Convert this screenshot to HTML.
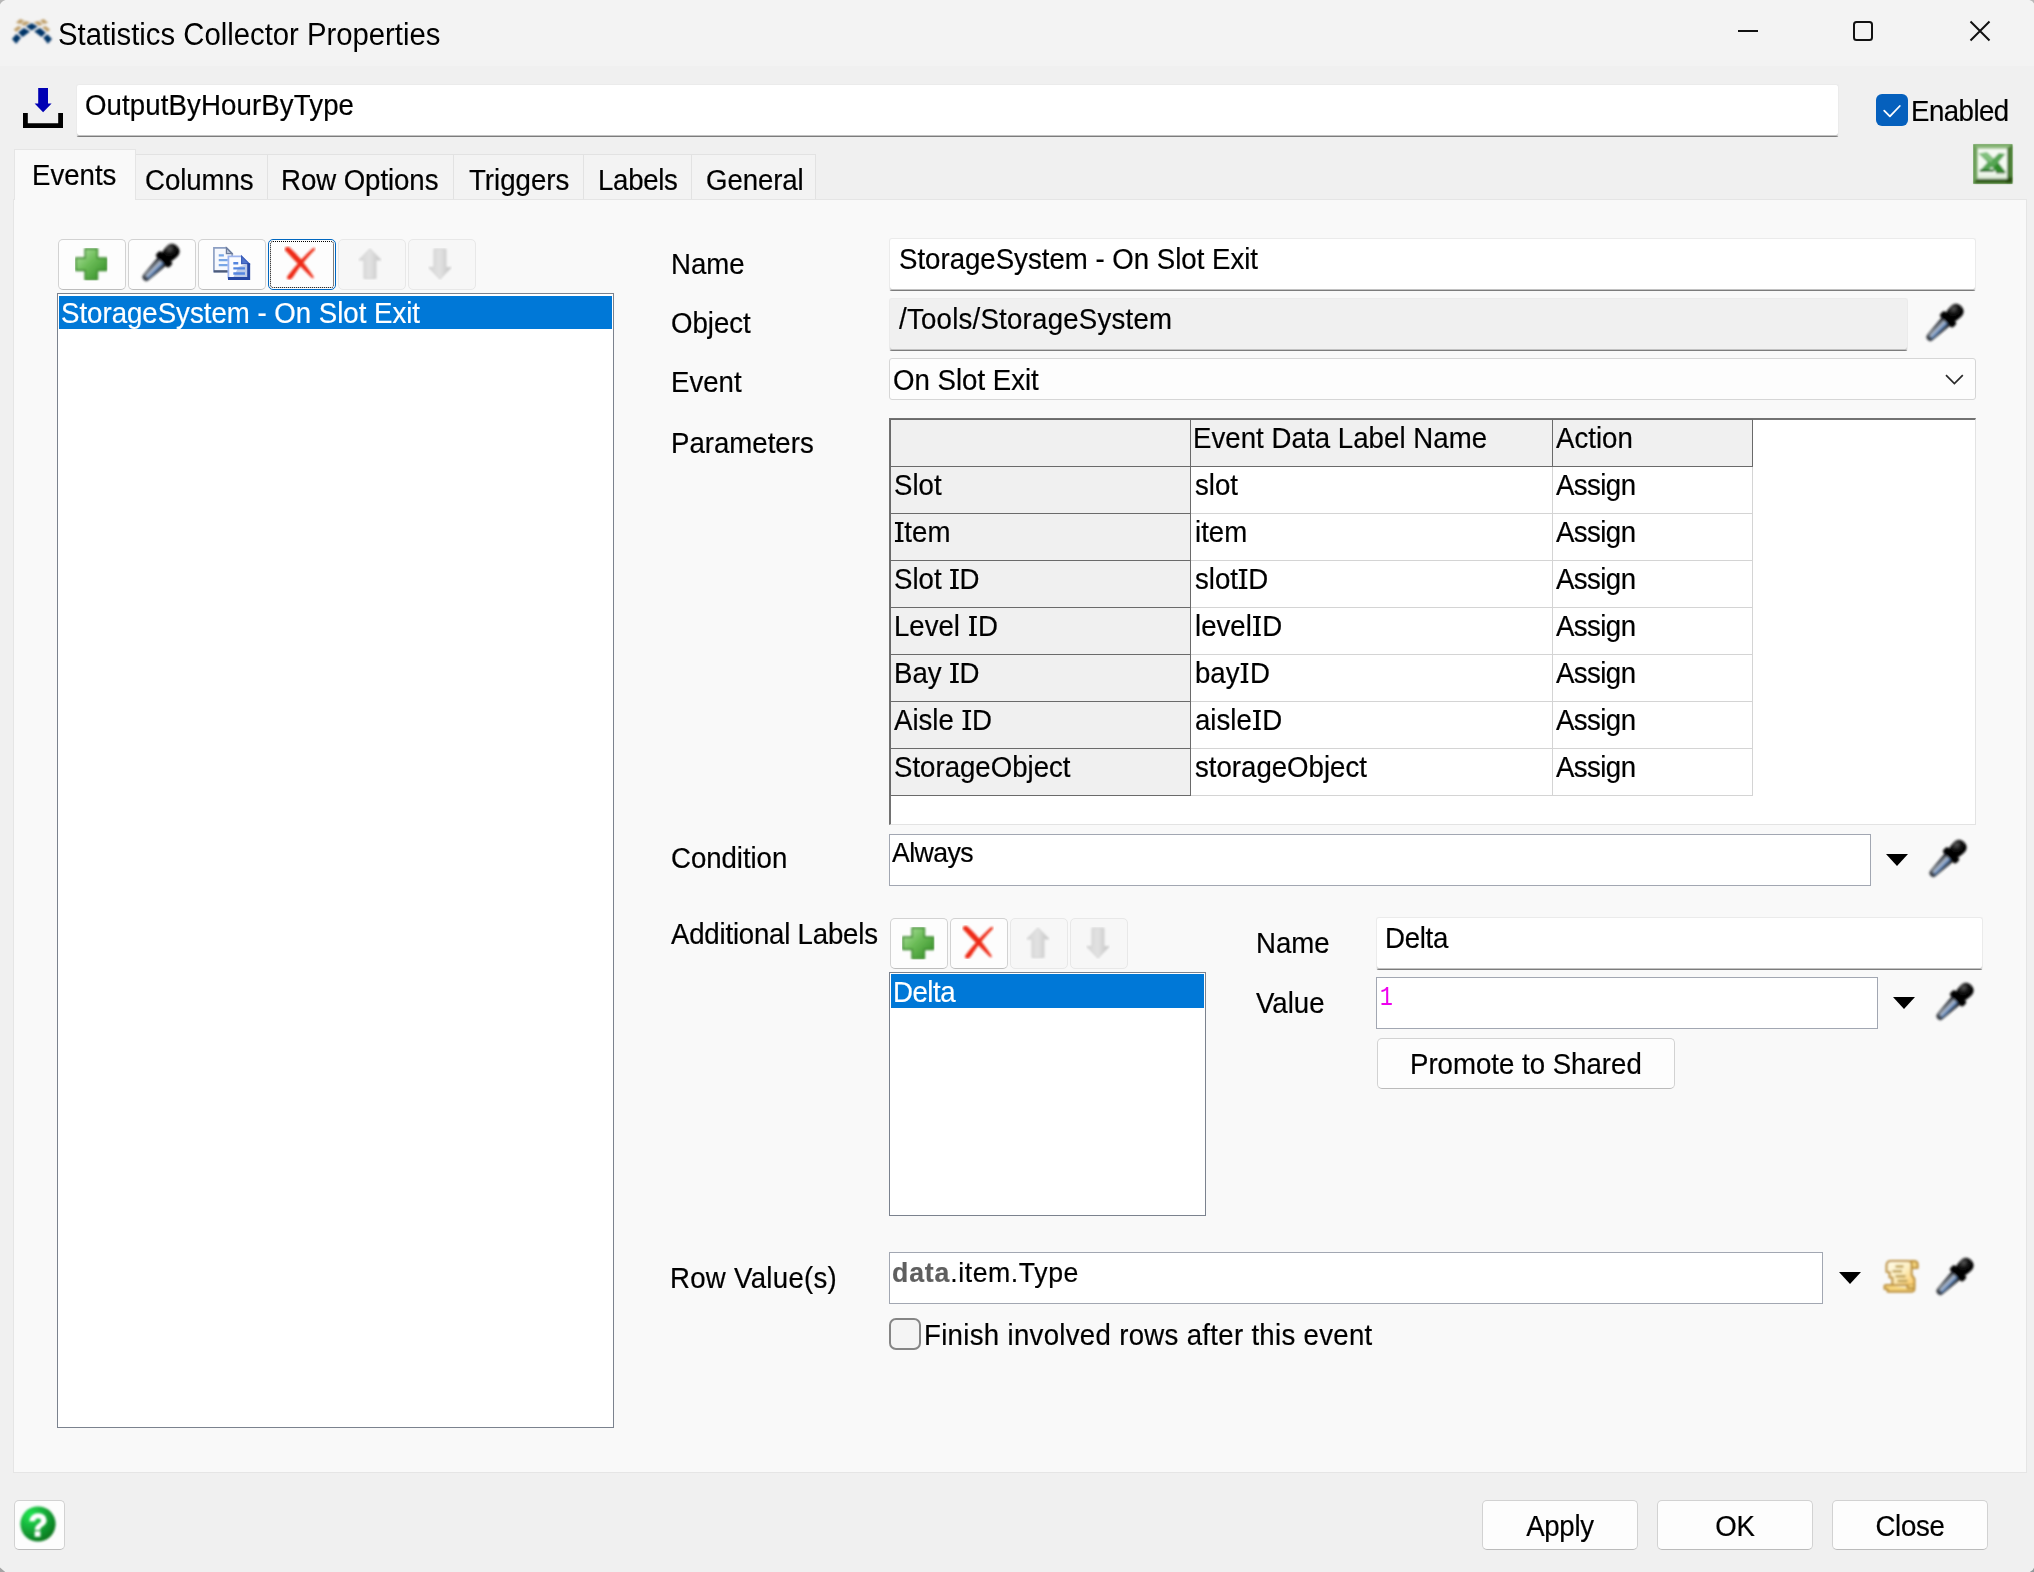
<!DOCTYPE html>
<html>
<head>
<meta charset="utf-8">
<title>Statistics Collector Properties</title>
<style>
*{box-sizing:border-box;margin:0;padding:0}
html,body{width:2034px;height:1572px;overflow:hidden}
body{background:#f0f0f0;font-family:"Liberation Sans",sans-serif;font-size:29px;color:#000;position:relative}
.a{position:absolute;white-space:pre}
.t{position:absolute;z-index:2;white-space:pre;-webkit-text-stroke:0.2px currentColor;line-height:32px;height:32px;margin-top:-0.5px;transform:scaleX(.952);transform-origin:0 0}
.t.c{transform-origin:50% 0}
#titlebar{left:0;top:0;width:2034px;height:66px;background:#f3f3f3}
#title{left:57.8px;top:16.3px;font-size:30.6px;line-height:36px;transform:scaleX(.957);-webkit-text-stroke:0}
.inp{position:absolute;background:#fff;border:1px solid #ebebeb;border-bottom:1px solid #7c7c7c;border-radius:3px;box-shadow:inset 0 -1px 0 #c2c2c2}
.box{position:absolute;background:#fff;border:1px solid #7b828e}
.tab{position:absolute;top:154px;height:46px;background:#f3f3f3;border:1px solid #e2e2e2;border-bottom:none}
#panel{left:13px;top:199px;width:2014px;height:1274px;background:#f9f9f9;border:1px solid #e5e5e5}
.tb{position:absolute;width:68px;height:51px;background:#fdfdfd;border:1px solid #d2d2d2;border-bottom-color:#bdbdbd;border-radius:5px}
.tb.dis{background:#f7f7f7;border-color:#e8e8e8}
.btn{position:absolute;background:#fdfdfd;border:1px solid #d2d2d2;border-bottom-color:#bbb;border-radius:5px;text-align:center}
.sel{position:absolute;background:#0078d7;color:#fff}
.hc{background:#f0f0f0;border:1px solid #6a6a6a;z-index:1}
.dc{background:#fff;border:1px solid #d4d4d4}
.cbox{position:absolute;background:#fff;border:1px solid #a2a7b2}
.tri{position:absolute;width:0;height:0;border-left:11px solid transparent;border-right:11px solid transparent;border-top:12px solid #000}
.I{display:inline-block;width:10.9px;height:20px;position:relative;letter-spacing:0}
.I::before{content:"";position:absolute;left:1.3px;right:1.3px;top:0;bottom:0;border-top:2px solid currentColor;border-bottom:2px solid currentColor}
.I::after{content:"";position:absolute;left:4.05px;width:2.8px;top:0;bottom:0;background:currentColor}
svg.a{overflow:visible}
</style>
</head>
<body>

<svg width="0" height="0" style="position:absolute">
<defs>
<linearGradient id="gTube" x1="0" x2="1" y1="0" y2="0">
 <stop offset="0" stop-color="#101418"/><stop offset="0.16" stop-color="#2c323a"/><stop offset="0.32" stop-color="#97a1ae"/><stop offset="0.47" stop-color="#aab6c8"/><stop offset="0.62" stop-color="#6c98d2"/><stop offset="0.78" stop-color="#3e4c60"/><stop offset="0.88" stop-color="#14181e"/><stop offset="1" stop-color="#08090c"/>
</linearGradient>
<radialGradient id="gBulb" cx="0.25" cy="0.45" r="0.6">
 <stop offset="0" stop-color="#5a5a5a"/><stop offset="0.55" stop-color="#101010"/><stop offset="1" stop-color="#000"/>
</radialGradient>
<linearGradient id="gPlus" x1="0" x2="1" y1="0" y2="1">
 <stop offset="0" stop-color="#b4e4a4"/><stop offset="0.45" stop-color="#6cbc58"/><stop offset="1" stop-color="#2f8a22"/>
</linearGradient>
<linearGradient id="gArr" x1="0" x2="1" y1="0" y2="0">
 <stop offset="0" stop-color="#d6d6d6"/><stop offset="0.5" stop-color="#e2e2e2"/><stop offset="1" stop-color="#c2c2c2"/>
</linearGradient>
<radialGradient id="gHelp" cx="0.3" cy="0.25" r="0.85">
 <stop offset="0" stop-color="#20e850"/><stop offset="0.5" stop-color="#16a838"/><stop offset="1" stop-color="#06701a"/>
</radialGradient>
<linearGradient id="gScroll" x1="0" x2="1" y1="0" y2="1">
 <stop offset="0" stop-color="#fffbe8"/><stop offset="0.5" stop-color="#fdf0c4"/><stop offset="1" stop-color="#fcc860"/>
</linearGradient>
<filter id="b3" x="-20%" y="-20%" width="140%" height="140%"><feGaussianBlur stdDeviation="0.8"/></filter>
<filter id="b6" x="-20%" y="-20%" width="140%" height="140%"><feGaussianBlur stdDeviation="0.8"/></filter>

<symbol id="dropper" viewBox="0 0 38 38" overflow="visible">
 <g transform="translate(1.6,35.8) rotate(45)" filter="url(#b6)">
  <path d="M-3.2,-3.8 Q-3.2,-0.6 0,-0.6 Q3.2,-0.6 3.2,-3.8 L5.4,-26.5 L-5.4,-26.5 Z" fill="url(#gTube)" stroke="#1c2026" stroke-width="1.3" stroke-opacity="0.85" stroke-linejoin="round"/>
  <ellipse cx="0" cy="-2.4" rx="2.6" ry="2" fill="#2a2e34" opacity="0.8"/>
  <rect x="-9.2" y="-32.6" width="18.4" height="7.2" rx="2.2" fill="#020202"/>
  <path d="M-5.8,-31.5 Q-7.4,-35 -7.4,-40 Q-7.4,-47.6 0,-47.6 Q7.4,-47.6 7.4,-40 Q7.4,-35 5.8,-31.5 Z" fill="url(#gBulb)"/>
 </g>
</symbol>

<symbol id="plus" viewBox="0 0 32 32">
 <path filter="url(#b3)" d="M10,0.8 H22 V10 H31.2 V22 H22 V31.2 H10 V22 H0.8 V10 H10 Z" fill="url(#gPlus)" stroke="#3c8c2e" stroke-width="1.6" stroke-linejoin="round"/>
</symbol>

<symbol id="redx" viewBox="0 0 32 34">
 <g filter="url(#b3)" fill="#ee2a12">
  <path d="M0.5,3.5 Q2,-0.5 5.5,1.5 Q16,11 22,20 Q27,26.5 30,31.5 Q28.5,33 27,31 Q22,26 17,21 Q8,12 0.5,3.5 Z"/>
  <path d="M31.5,3 Q30,1 28,3 Q18,12 10,22 Q5,28 3,31 Q3,34 6.5,33.5 Q9,32 11,28 Q18,17 31.5,3 Z"/>
 </g>
</symbol>

<symbol id="uparr" viewBox="0 0 24 32">
 <path filter="url(#b3)" d="M12,0.8 L23.2,12 H18 V30.5 H6 V12 H0.8 Z" fill="url(#gArr)" stroke="#cfcfcf" stroke-width="1"/>
</symbol>
<symbol id="dnarr" viewBox="0 0 24 32">
 <path filter="url(#b3)" d="M12,31.2 L23.2,19.5 H18 V1 H6 V19.5 H0.8 Z" fill="url(#gArr)" stroke="#cfcfcf" stroke-width="1"/>
</symbol>

<symbol id="copy" viewBox="0 0 38 34" overflow="visible">
 <g filter="url(#b3)">
  <path d="M0.9,0.9 H13.6 L19.4,6.8 V25 H0.9 Z" fill="#f6f8fd" stroke="#8c9ec2" stroke-width="1.7"/>
  <path d="M13.6,0.9 V6.8 H19.4 Z" fill="#b8c4da" stroke="#6c7c9c" stroke-width="1.3"/>
  <path d="M0.9,24.7 H15" stroke="#4e5c7c" stroke-width="2.3"/>
  <g stroke="#78a6e6" stroke-width="2.3"><path d="M5.8,8.6H11M5.8,13.4H15M5.8,18.5H15"/></g>
  <path d="M15.4,9.2 H29 L36.6,16.6 V32.2 H15.4 Z" fill="#fbfcff"/>
  <path d="M26,20 L36,17 V32 H20 Z" fill="#a9bbdf" opacity="0.75"/>
  <path d="M15.6,32 V9.4 H29" fill="none" stroke="#9db4ee" stroke-width="1.8"/>
  <path d="M29,9.2 V16.8 H36.6 Z" fill="#4f74cc" stroke="#3a5cba" stroke-width="1.2"/>
  <path d="M36.2,16.4 V32 H15.2" fill="none" stroke="#2646a4" stroke-width="3"/>
  <g stroke="#5586e0" stroke-width="2.5"><path d="M20.6,16.6H25.6M20.6,21.7H32.4M20.6,26.8H32.4"/></g>
 </g>
</symbol>

<symbol id="scroll" viewBox="0 0 36 34" overflow="visible">
 <g filter="url(#b3)" stroke="#bf9440" stroke-width="2.2" stroke-linejoin="round">
  <path d="M27,2 H31 Q34.6,2 34.6,5.5 V9 H28.5" fill="#f2d27a"/>
  <path d="M8,2 Q3.6,2 3.6,6.5 V13 H6.6 V18.5 H9.4 V26 H31.4 V20 L28.6,16 V5 Q28.6,2 25,2 Z" fill="url(#gScroll)"/>
  <path d="M1.6,26 H24.5 V29.2 H31.4 V26 M1.6,26 V30 H4.6 V32.6 H28.8 Q31.4,32.6 31.4,29.6" fill="#f7d57c"/>
  <g stroke="#bfa258" stroke-width="2.6" fill="none"><path d="M12.5,7.5H20.5M9.5,12.3H19M12.5,17.3H22.5M14.5,22H24.5"/></g>
 </g>
</symbol>

<symbol id="excel" viewBox="0 0 40 40" overflow="visible">
 <rect x="0.2" y="0.2" width="39.3" height="39.6" fill="#6da05a"/>
 <g filter="url(#b3)">
  <path d="M1,1 H39 L35,4.6 H4.4 Z" fill="#8cba7c"/>
  <path d="M39,1 V39 L34,34.6 V4.6 Z" fill="#4c7c34"/>
  <path d="M1,39 H39 L34,34.6 H4.4 Z" fill="#365e1c"/>
  <path d="M37,33 L39,33 V39 H33 V37 Z" fill="#284a10"/>
  <rect x="4.4" y="4.6" width="29.6" height="30" fill="#f4faf2"/>
  <path d="M5.6,9.6 L14,8.2 L20.5,14.6 L26,9 L32.4,10 L25.2,18.6 L32.8,28.2 L23.4,28.8 L19,23 L13,27.8 L6,27.6 L14.6,18.2 Z" fill="#55a552"/>
  <path d="M5.6,9.6 L14,8.2 L20.5,14.6 L17.5,18.5 Z" fill="#8cc888" opacity="0.8"/>
  <path d="M25.2,18.6 L32.8,28.2 L23.4,28.8 L20.5,23.5 Z" fill="#2f8a2c"/>
  <path d="M6.8,26.6 H21" stroke="#176817" stroke-width="2.4"/>
  <path d="M23,28.6 H32" stroke="#3a6a2a" stroke-width="1.6"/>
  <rect x="5" y="30.5" width="28.4" height="3.6" fill="#e4f0e0"/>
 </g>
</symbol>
</defs>
</svg>
<div class="a" id="titlebar"></div>
<div class="t" id="title">Statistics Collector Properties</div>

<!-- name row -->
<div class="inp" style="left:76px;top:84px;width:1763px;height:53px"></div>
<div class="t" style="left:85px;top:89px;letter-spacing:0.12px">OutputByHourByType</div>
<div class="t" style="left:1910.6px;top:95.3px;letter-spacing:-0.55px">Enabled</div>

<!-- tabs -->
<div class="tab" style="left:135px;width:133px"></div>
<div class="tab" style="left:267px;width:187px"></div>
<div class="tab" style="left:453px;width:131px"></div>
<div class="tab" style="left:583px;width:109px"></div>
<div class="tab" style="left:691px;width:125px"></div>
<div class="a" id="panel"></div>
<div class="a" style="left:14px;top:149px;width:122px;height:51px;background:#f9f9f9;border:1px solid #e5e5e5;border-bottom:none"></div>
<div class="t" style="left:31.6px;top:159px">Events</div>
<div class="t" style="left:145px;top:164px;letter-spacing:-0.05px">Columns</div>
<div class="t" style="left:281.4px;top:164px;letter-spacing:-0.06px">Row Options</div>
<div class="t" style="left:469px;top:164px">Triggers</div>
<div class="t" style="left:597.7px;top:164px;letter-spacing:-0.3px">Labels</div>
<div class="t" style="left:706px;top:164px;letter-spacing:-0.1px">General</div>

<!-- left toolbar + list -->
<div class="tb" style="left:58px;top:239px"></div>
<div class="tb" style="left:128px;top:239px"></div>
<div class="tb" style="left:198px;top:239px"></div>
<div class="tb" style="left:268px;top:239px;border-color:#0067c0"></div>
<div class="tb dis" style="left:338px;top:239px"></div>
<div class="tb dis" style="left:408px;top:239px"></div>
<div class="box" style="left:57px;top:293px;width:557px;height:1135px"></div>
<div class="sel" style="left:59px;top:296px;width:553px;height:33px"></div>
<div class="t" style="left:61px;top:297px;color:#fff">StorageSystem - On Slot Exit</div>

<!-- right form -->
<div class="t" style="left:670.9px;top:248.2px">Name</div>
<div class="t" style="left:671.2px;top:307.2px">Object</div>
<div class="t" style="left:671.2px;top:366.2px">Event</div>
<div class="t" style="left:670.6px;top:427.6px">Parameters</div>
<div class="t" style="left:670.6px;top:842.8px;letter-spacing:-0.05px">Condition</div>
<div class="t" style="left:671px;top:918.7px;letter-spacing:-0.22px">Additional Labels</div>
<div class="t" style="left:670.3px;top:1262px;letter-spacing:0.3px">Row Value(s)</div>

<div class="inp" style="left:889px;top:238px;width:1087px;height:53px"></div>
<div class="t" style="left:899px;top:243px">StorageSystem - On Slot Exit</div>
<div class="inp" style="left:889px;top:298px;width:1019px;height:53px;background:#f0f0f0"></div>
<div class="t" style="left:898.8px;top:303px;letter-spacing:0.25px">/Tools/StorageSystem</div>
<div class="a" style="left:889px;top:358px;width:1087px;height:42px;background:#fdfdfd;border:1px solid #d6d6d6;border-radius:3px"></div>
<div class="t" style="left:893px;top:364px">On Slot Exit</div>

<!-- parameters table -->
<div class="a" style="left:889px;top:418px;width:1087px;height:407px;background:#fff;border-left:2px solid #727272;border-top:2px solid #727272;border-right:1px solid #e3e3e3;border-bottom:1px solid #e3e3e3"></div>
<div class="a hc" style="left:890px;top:419px;width:301px;height:48px"></div>
<div class="a hc" style="left:1190px;top:419px;width:363px;height:48px"></div>
<div class="a hc" style="left:1552px;top:419px;width:201px;height:48px"></div>
<div class="t" style="left:1193.4px;top:422px;letter-spacing:0.05px">Event Data Label Name</div>
<div class="t" style="left:1556px;top:422px">Action</div>
<div class="a hc" style="left:890px;top:466px;width:301px;height:48px"></div>
<div class="a dc" style="left:1190px;top:466px;width:363px;height:48px"></div>
<div class="a dc" style="left:1552px;top:466px;width:201px;height:48px"></div>
<div class="t" style="left:894px;top:469.6px">Slot</div>
<div class="t" style="left:1195px;top:469.6px">slot</div>
<div class="t" style="left:1556px;top:469.6px;letter-spacing:-0.6px">Assign</div>
<div class="a hc" style="left:890px;top:513px;width:301px;height:48px"></div>
<div class="a dc" style="left:1190px;top:513px;width:363px;height:48px"></div>
<div class="a dc" style="left:1552px;top:513px;width:201px;height:48px"></div>
<div class="t" style="left:894px;top:516.6px"><span class="I"></span>tem</div>
<div class="t" style="left:1195px;top:516.6px">item</div>
<div class="t" style="left:1556px;top:516.6px;letter-spacing:-0.6px">Assign</div>
<div class="a hc" style="left:890px;top:560px;width:301px;height:48px"></div>
<div class="a dc" style="left:1190px;top:560px;width:363px;height:48px"></div>
<div class="a dc" style="left:1552px;top:560px;width:201px;height:48px"></div>
<div class="t" style="left:894px;top:563.6px">Slot <span class="I"></span>D</div>
<div class="t" style="left:1195px;top:563.6px">slot<span class="I"></span>D</div>
<div class="t" style="left:1556px;top:563.6px;letter-spacing:-0.6px">Assign</div>
<div class="a hc" style="left:890px;top:607px;width:301px;height:48px"></div>
<div class="a dc" style="left:1190px;top:607px;width:363px;height:48px"></div>
<div class="a dc" style="left:1552px;top:607px;width:201px;height:48px"></div>
<div class="t" style="left:894px;top:610.6px">Level <span class="I"></span>D</div>
<div class="t" style="left:1195px;top:610.6px">level<span class="I"></span>D</div>
<div class="t" style="left:1556px;top:610.6px;letter-spacing:-0.6px">Assign</div>
<div class="a hc" style="left:890px;top:654px;width:301px;height:48px"></div>
<div class="a dc" style="left:1190px;top:654px;width:363px;height:48px"></div>
<div class="a dc" style="left:1552px;top:654px;width:201px;height:48px"></div>
<div class="t" style="left:894px;top:657.6px">Bay <span class="I"></span>D</div>
<div class="t" style="left:1195px;top:657.6px">bay<span class="I"></span>D</div>
<div class="t" style="left:1556px;top:657.6px;letter-spacing:-0.6px">Assign</div>
<div class="a hc" style="left:890px;top:701px;width:301px;height:48px"></div>
<div class="a dc" style="left:1190px;top:701px;width:363px;height:48px"></div>
<div class="a dc" style="left:1552px;top:701px;width:201px;height:48px"></div>
<div class="t" style="left:894px;top:704.6px">Aisle <span class="I"></span>D</div>
<div class="t" style="left:1195px;top:704.6px">aisle<span class="I"></span>D</div>
<div class="t" style="left:1556px;top:704.6px;letter-spacing:-0.6px">Assign</div>
<div class="a hc" style="left:890px;top:748px;width:301px;height:48px"></div>
<div class="a dc" style="left:1190px;top:748px;width:363px;height:48px"></div>
<div class="a dc" style="left:1552px;top:748px;width:201px;height:48px"></div>
<div class="t" style="left:894px;top:751.6px">StorageObject</div>
<div class="t" style="left:1195px;top:751.6px">storageObject</div>
<div class="t" style="left:1556px;top:751.6px;letter-spacing:-0.6px">Assign</div>

<!-- condition -->
<div class="cbox" style="left:889px;top:834px;width:982px;height:52px"></div>
<div class="t" style="left:892px;top:837px;font-size:28px;letter-spacing:-0.6px">Always</div>
<div class="tri" style="left:1886px;top:853.7px"></div>

<!-- additional labels -->
<div class="tb" style="left:890px;top:918px;width:58px"></div>
<div class="tb" style="left:950px;top:918px;width:58px"></div>
<div class="tb dis" style="left:1010px;top:918px;width:58px"></div>
<div class="tb dis" style="left:1070px;top:918px;width:58px"></div>
<div class="box" style="left:889px;top:972px;width:317px;height:244px"></div>
<div class="sel" style="left:891px;top:974px;width:313px;height:34px"></div>
<div class="t" style="left:892.5px;top:976.5px;color:#fff;letter-spacing:-0.5px">Delta</div>
<div class="t" style="left:1256px;top:927.7px">Name</div>
<div class="t" style="left:1256px;top:987.7px">Value</div>
<div class="inp" style="left:1376px;top:917px;width:607px;height:53px"></div>
<div class="t" style="left:1384.8px;top:922.7px;letter-spacing:-0.3px">Delta</div>
<div class="cbox" style="left:1376px;top:977px;width:502px;height:52px"></div>
<div class="t" style="left:1380.4px;top:982.6px;font-size:28px;color:#ee00ee;font-family:'Liberation Mono',monospace;transform:scaleX(.76)">1</div>
<div class="tri" style="left:1893px;top:996.5px"></div>
<div class="btn" style="left:1377px;top:1038px;width:298px;height:51px"></div>
<div class="t" style="left:1409.6px;top:1048.5px;letter-spacing:0px">Promote to Shared</div>

<!-- row values -->
<div class="cbox" style="left:889px;top:1252px;width:934px;height:52px"></div>
<div class="t" style="left:892px;top:1257px;font-size:28px;letter-spacing:0.6px"><b style="color:#5f5f5f;letter-spacing:0.9px">data</b>.item.Type</div>
<div class="tri" style="left:1839px;top:1271.5px"></div>
<div class="a" style="left:889px;top:1318px;width:32px;height:32px;background:#f4f4f4;border:2px solid #858585;border-radius:7px"></div>
<div class="t" style="left:924.3px;top:1319.5px;letter-spacing:0.32px">Finish involved rows after this event</div>

<!-- bottom buttons -->
<div class="btn" style="left:14px;top:1500px;width:51px;height:50px"></div>
<div class="btn" style="left:1482px;top:1500px;width:156px;height:50px"></div>
<div class="btn" style="left:1657px;top:1500px;width:156px;height:50px"></div>
<div class="btn" style="left:1832px;top:1500px;width:156px;height:50px"></div>
<div class="t c" style="left:1482px;top:1510.3px;width:156px;text-align:center;letter-spacing:-0.3px">Apply</div>
<div class="t c" style="left:1657px;top:1510.3px;width:156px;text-align:center;letter-spacing:-0.3px">OK</div>
<div class="t c" style="left:1832px;top:1510.3px;width:156px;text-align:center;letter-spacing:-0.3px">Close</div>

<!-- icons -->
<svg class="a" style="left:8px;top:12px" width="52" height="38" viewBox="8 12 52 38">
 <g fill="#c0a06c" filter="url(#b3)">
  <polygon points="15.9,22.7 20,18.9 24.4,20.4 20.3,24"/>
  <polygon points="21,24.3 25.4,20.9 30.5,22.5 24.4,26.1"/>
  <polygon points="13.6,29.6 18.2,25.9 21.9,27.3 16.4,32"/>
  <polygon points="33.6,22.5 38.4,20.9 42.8,24.3 39.5,26.1"/>
  <polygon points="40,20.4 43.8,18.9 48.1,22.7 43.8,24"/>
  <polygon points="42,27.3 45.6,25.9 50.2,29.6 47.4,32"/>
 </g>
 <g fill="#003468" filter="url(#b3)">
  <polygon points="12,39.1 16.4,34 21,37.8 16.2,43.7"/>
  <polygon points="18.1,32.5 23.9,28 30,31.4 22.6,36.9"/>
  <polygon points="25.9,26.3 31.8,23.2 37.8,26.6 31.5,30.4"/>
  <polygon points="34.1,31.2 40,28 45.8,32.7 41.5,37.1"/>
  <polygon points="43.2,37.8 47.4,34.2 52,39.1 47.9,43.7"/>
 </g>
</svg>
<svg class="a" style="left:1730px;top:14px" width="270" height="36" viewBox="1730 14 270 36" fill="none" stroke="#111" stroke-width="2">
 <path d="M1738,31 H1758"/>
 <rect x="1854" y="22" width="18" height="18" rx="2.5"/>
 <path d="M1970.5,21.5 L1989.5,40.5 M1989.5,21.5 L1970.5,40.5"/>
</svg>
<svg class="a" style="left:22px;top:86px" width="44" height="44" viewBox="22 86 44 44">
 <path d="M38.2,88 H48 V103.6 H51.6 L43.1,112.2 L34.6,103.6 H38.2 Z" fill="#0000b4"/>
 <path d="M23,113 H27.8 V123.2 H58.2 V113 H63 V128 H23 Z" fill="#000"/>
</svg>
<div class="a" style="left:1876px;top:94px;width:32px;height:32px;background:#0560bd;border-radius:6px"></div>
<svg class="a" style="left:1876px;top:94px" width="32" height="32" viewBox="1876 94 32 32"><path d="M1884.2,110.6 L1889.9,116.3 L1899.8,106" fill="none" stroke="#fff" stroke-width="1.8" stroke-linecap="round" stroke-linejoin="round"/></svg>
<svg class="a" style="left:1973px;top:144px" width="40" height="40"><use href="#excel"/></svg>

<svg class="a" style="left:74.5px;top:247.5px" width="32.5" height="32.5"><use href="#plus"/></svg>
<svg class="a" style="left:141.5px;top:243.5px" width="38" height="38"><use href="#dropper"/></svg>
<svg class="a" style="left:212.5px;top:247px" width="37.5" height="33.5"><use href="#copy"/></svg>
<div class="a" style="left:270px;top:241px;width:64px;height:47px;border:1px dotted #000;border-radius:3px"></div>
<svg class="a" style="left:284px;top:246px" width="32" height="34"><use href="#redx"/></svg>
<svg class="a" style="left:358px;top:247.5px" width="24" height="32"><use href="#uparr"/></svg>
<svg class="a" style="left:428px;top:247.5px" width="24" height="32"><use href="#dnarr"/></svg>

<svg class="a" style="left:1926px;top:304px" width="38" height="38"><use href="#dropper"/></svg>
<svg class="a" style="left:1940px;top:370px" width="30" height="20" viewBox="1940 370 30 20"><path d="M1946,375.2 L1954.4,383.5 L1962.8,375.2" fill="none" stroke="#2a2a2a" stroke-width="1.7"/></svg>
<svg class="a" style="left:1928.5px;top:840px" width="38" height="38"><use href="#dropper"/></svg>

<svg class="a" style="left:902px;top:926.5px" width="32.5" height="32.5"><use href="#plus"/></svg>
<svg class="a" style="left:962px;top:925px" width="32" height="34"><use href="#redx"/></svg>
<svg class="a" style="left:1025.5px;top:926.5px" width="24" height="32"><use href="#uparr"/></svg>
<svg class="a" style="left:1085.5px;top:926.5px" width="24" height="32"><use href="#dnarr"/></svg>
<svg class="a" style="left:1935.5px;top:983px" width="38" height="38"><use href="#dropper"/></svg>

<svg class="a" style="left:1883px;top:1259px" width="36" height="34"><use href="#scroll"/></svg>
<svg class="a" style="left:1936px;top:1257.5px" width="38" height="38"><use href="#dropper"/></svg>

<svg class="a" style="left:19px;top:1505px" width="38" height="38" viewBox="0 0 38 38"><circle cx="19" cy="19" r="17.6" fill="url(#gHelp)" filter="url(#b3)"/><text x="19.3" y="31.4" text-anchor="middle" font-family="Liberation Sans" font-weight="bold" font-size="31" fill="#fff" stroke="#fff" stroke-width="1.3" filter="url(#b3)">?</text></svg>

<svg class="a" style="left:0;top:0" width="2034" height="1572" viewBox="0 0 2034 1572" pointer-events="none">
 <path d="M0,0 H5.5 Q1.5,1 0,4.5 Z" fill="#b6b6b6"/>
 <path d="M2034,0 H2029.5 Q2032.8,0.8 2034,3.5 Z" fill="#b8b8b8"/>
 <path d="M0,1572 V1567.6 L5.2,1572 Z" fill="#a4a4a4"/>
 <path d="M2034,1572 V1567.8 Q2033,1571 2029.8,1572 Z" fill="#8f9a9c"/>
</svg>

</body>
</html>
